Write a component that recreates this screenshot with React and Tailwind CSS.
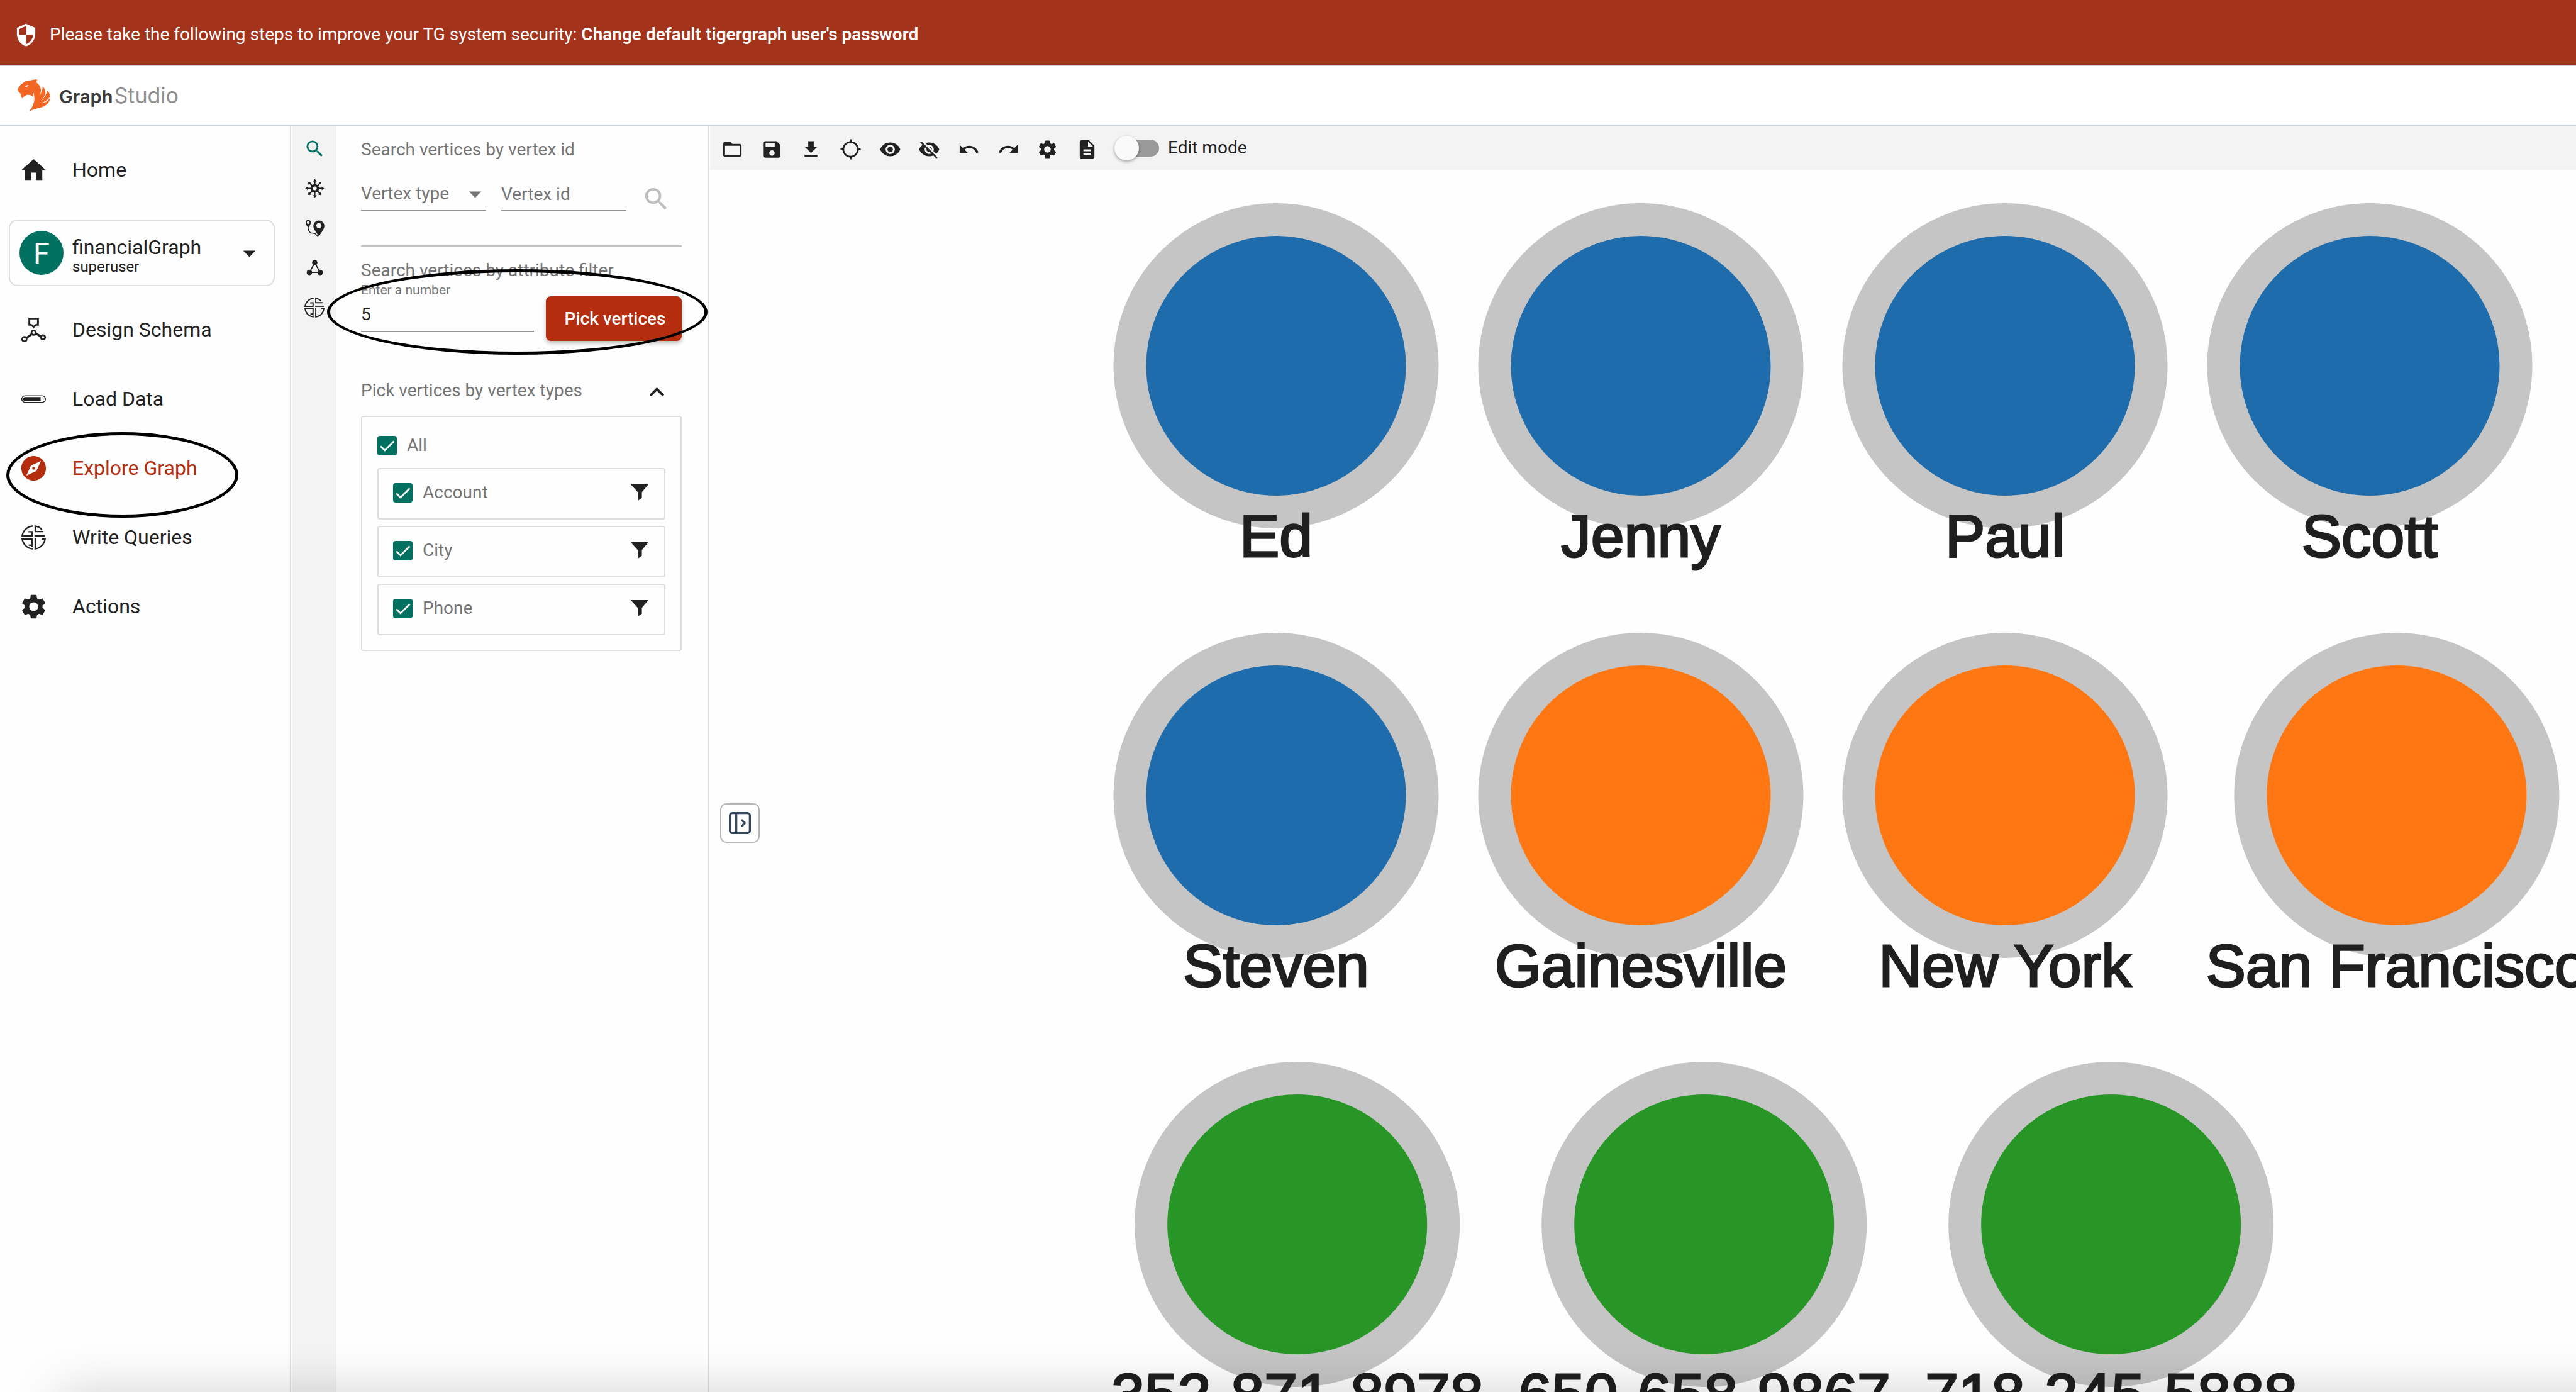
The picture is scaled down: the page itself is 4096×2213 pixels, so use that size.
import {
  MdSecurity, MdHome, MdExplore, MdSettings, MdArrowDropDown, MdSearch, MdFolderOpen, MdSave,
  MdFileDownload, MdLocationSearching, MdVisibility, MdVisibilityOff, MdUndo, MdRedo,
  MdDescription, MdKeyboardArrowUp,
} from "react-icons/md";

function TigerLogo() {
  return (
    <svg viewBox="0 0 160 156" className="h-[51px] w-[52px] shrink-0" aria-hidden="true">
      <path
        fill="#f26522"
        d="M95 0 L92 16 C104 22 112 36 114 50 C114 60 112 70 109 80 C116 66 122 50 123 35 C132 44 137 56 136 66 C134 80 124 94 114 106 C130 92 142 72 145 53 C156 64 161 80 159 94 C155 118 134 132 112 138 C92 143 74 148 58 156 C70 138 80 120 82 100 C83 84 80 66 72 52 C76 64 78 76 76 86 C70 78 60 74 48 76 C38 78 30 84 24 93 C18 88 14 80 15 70 C8 66 4 60 0 52 L3 44 C6 34 16 24 26 18 C38 8 50 4 62 5 C74 2 84 0 95 0 Z"
      />
      <path fill="#fff" d="M36 36 C40 29 48 27 56 27 C50 29 47 33 46 38 C42 35 39 35 36 36 Z" />
      <path fill="#fff" d="M158 84 C150 100 134 108 118 114 C134 116 150 106 158 90 Z" opacity="0.9" />
    </svg>
  );
}

function SchemaIcon() {
  return (
    <svg viewBox="-4 -4 48 48" className="size-[47px]" fill="none" stroke="currentColor" aria-hidden="true">
      <path strokeWidth="3" d="M13 1.5H27V11.5H24.5L20 15L15.5 11.5H13Z" />
      <path strokeWidth="3.4" d="M8.5 33L16.5 27M24 26L31.5 30.5" />
      <g strokeWidth="2.8">
        <circle cx="20" cy="24.6" r="3.5" />
        <circle cx="5" cy="35" r="3.6" />
        <circle cx="35.2" cy="32" r="3.5" />
      </g>
    </svg>
  );
}

function LoadIcon() {
  return (
    <svg viewBox="-4 -4 48 48" className="size-[47px]" fill="none" aria-hidden="true">
      <rect x="0.7" y="14.6" width="38.6" height="10.6" rx="5.3" stroke="currentColor" strokeWidth="1.4" />
      <path fill="currentColor" d="M6.4 16.6H31.4V23.4H6.4A3.4 3.4 0 0 1 6.4 16.6Z" />
    </svg>
  );
}

function GsqlIcon({ className }) {
  return (
    <svg viewBox="0 0 40 40" className={className} fill="none" stroke="currentColor" strokeWidth="2.4" aria-hidden="true">
      <path d="M18.500 1.400A18.700 18.700 0 0 0 1.400 17.400H17.200V10.600H11.500" />
      <path d="M33.500 7.200A18.700 18.700 0 0 0 22.600 1.400V10.400H36" />
      <path d="M21.400 17.400H38.600" />
      <path d="M18.500 38.600A18.700 18.700 0 0 1 1.400 22.600H17.200V36" />
      <path d="M12 32.600H17.200" />
      <path d="M22.600 21.400V38.600A18.700 18.700 0 0 0 38.600 22.600H33.500" />
    </svg>
  );
}

const ANGLES = [0, 45, 90, 135, 180, 225, 270, 315];

function ExpandIcon() {
  return (
    <svg viewBox="0 0 36 36" className="size-[35px]" aria-hidden="true">
      <circle cx="18" cy="18" r="5.1" fill="none" stroke="currentColor" strokeWidth="3.800" />
      {ANGLES.map((a) => (
        <g key={a} transform={`rotate(${a} 18 18)`}>
          <path d="M18 12V5" stroke="currentColor" strokeWidth="2.200" />
          <path d="M18 2.600L21.200 6.600H14.800Z" fill="currentColor" />
        </g>
      ))}
    </svg>
  );
}

function PathIcon() {
  return (
    <svg viewBox="0 0 36 36" className="size-[35px]" aria-hidden="true">
      <path fill="currentColor" fillRule="evenodd" d="M24.7 5.7a9 9 0 0 1 9 9c0 5-5.4 11.6-9 16.7c-3.600-5.100-9-11.700-9-16.700a9 9 0 0 1 9-9ZM24.700 9.700a4.300 4.300 0 1 0 0 8.600a4.300 4.300 0 0 0 0-8.600Z" />
      <path fill="currentColor" fillRule="evenodd" d="M7.300 4.700a4.300 4.300 0 0 1 4.300 4.300c0 2.500-2.600 6-4.300 9c-1.700-3-4.300-6.500-4.300-9a4.300 4.300 0 0 1 4.300-4.300ZM7.300 6.600a2.300 2.300 0 1 0 0 4.600a2.300 2.300 0 0 0 0-4.600Z" />
      <path fill="none" stroke="currentColor" strokeWidth="1.600" d="M7.300 18.800C8 22 9 26 12.500 26.300C16 26.200 18.500 26.500 20 28.600C21 29.800 22 30.600 23.500 31" />
    </svg>
  );
}

function TriangleIcon() {
  return (
    <svg viewBox="0 0 36 36" className="size-[35px]" aria-hidden="true">
      <path fill="none" stroke="currentColor" strokeWidth="1.800" d="M18 10L9.200 25.800H26.800Z" />
      <g fill="currentColor">
        <circle cx="18" cy="9.800" r="4.400" />
        <circle cx="9.200" cy="25.800" r="4.500" />
        <circle cx="26.800" cy="25.800" r="4.500" />
      </g>
    </svg>
  );
}

function FunnelIcon() {
  return (
    <svg viewBox="0 0 26 26" className="size-[26px]" fill="currentColor" aria-hidden="true">
      <path d="M0 0H26V1.200L16.600 12.600V21.800L10.200 26V12.600L0 1.200Z" />
    </svg>
  );
}

function PanelToggleIcon() {
  return (
    <svg viewBox="0 0 36 36" className="size-[35px]" fill="none" stroke="#34495e" strokeWidth="3.400" aria-hidden="true">
      <rect x="1.700" y="1.700" width="32.600" height="32.600" rx="4" />
      <path d="M12 2V34" />
      <path d="M21.500 13.500L26 18L21.500 22.500" strokeLinecap="round" strokeLinejoin="round" />
    </svg>
  );
}

function NavItem({ icon, label, active }) {
  return (
    <a
      href="#"
      aria-current={active ? "page" : undefined}
      className={`flex h-[110px] items-center gap-[38px] pl-[30px] text-[32px] ${active ? "text-[#b52d0f]" : "text-[#212121]"}`}
    >
      {icon}
      <span>{label}</span>
    </a>
  );
}

function Sidebar() {
  return (
    <nav className="w-[463px] shrink-0 border-r-2 border-[#dedede] pt-[15px]">
      <NavItem icon={<MdHome className="size-[47px]" />} label="Home" />
      <button
        type="button"
        className="mx-[14px] mt-6 mb-[14px] flex h-[106px] w-[423px] items-center rounded-[14px] border-2 border-[#dedede] pl-[15px] text-left text-[#212121]"
      >
        <span className="flex size-[70px] items-center justify-center rounded-full bg-[#007060] text-[47px] leading-none text-white">F</span>
        <span className="ml-[14px] flex flex-1 flex-col pt-2.5">
          <span className="text-[32px] leading-[34px]">financialGraph</span>
          <span className="text-[24px] leading-[28px]">superuser</span>
        </span>
        <MdArrowDropDown className="mr-[15px] size-[47px]" />
      </button>
      <NavItem icon={<SchemaIcon />} label="Design Schema" />
      <NavItem icon={<LoadIcon />} label="Load Data" />
      <NavItem icon={<MdExplore className="size-[47px]" />} label="Explore Graph" active />
      <NavItem icon={<GsqlIcon className="m-1 size-[39px]" />} label="Write Queries" />
      <NavItem icon={<MdSettings className="size-[47px]" />} label="Actions" />
    </nav>
  );
}

function Rail() {
  const tools = [
    ["Search vertices", <MdSearch className="size-[35px] text-[#007060]" />],
    ["Expand from vertices", <ExpandIcon />],
    ["Find paths", <PathIcon />],
    ["Show connections", <TriangleIcon />],
    ["Run queries", <GsqlIcon className="size-[32px]" />],
  ];
  return (
    <div className="ml-0.5 flex w-[70px] shrink-0 flex-col items-center gap-7 bg-[#f3f3f3] pt-[19px] text-[#212121]">
      {tools.map(([name, icon]) => (
        <button key={name} type="button" aria-label={name} className="flex size-[35px] items-center justify-center">
          {icon}
        </button>
      ))}
    </div>
  );
}

function Check({ label }) {
  return (
    <label className="flex items-center gap-4">
      <span className="relative size-[31px]">
        <input type="checkbox" defaultChecked className="block size-[31px] appearance-none rounded-[4px] bg-[#007060]" />
        <svg viewBox="0 0 32 32" className="pointer-events-none absolute inset-0" fill="none" stroke="#fff" strokeWidth="2.800" aria-hidden="true">
          <path d="M5.500 17L12.200 23.700L27.300 8.700" />
        </svg>
      </span>
      <span>{label}</span>
    </label>
  );
}

function SearchPanel() {
  return (
    <section className="w-[592px] shrink-0 border-r-2 border-[#dedede] pt-[22px] pr-[41px] pl-[39px] text-[28px] leading-[32px] text-[#757575]">
      <h2>Search vertices by vertex id</h2>
      <div className="mt-7 flex gap-6">
        <div className="relative h-[54px] w-[199px]">
          <select aria-label="Vertex type" className="h-full w-full appearance-none border-b-2 border-[#949494] bg-transparent outline-none">
            <option>Vertex type</option>
          </select>
          <MdArrowDropDown className="pointer-events-none absolute top-[3px] -right-[6px] size-[47px]" />
        </div>
        <input
          type="text"
          aria-label="Vertex id"
          placeholder="Vertex id"
          className="h-[54px] w-[199px] border-b-2 border-[#949494] outline-none placeholder:text-[#757575]"
        />
        <button type="button" aria-label="Search" className="flex h-[58px] items-end text-[#bdbdbd]">
          <MdSearch className="size-[47px]" />
        </button>
      </div>
      <hr className="mt-[50px] border-t-2 border-[#c2c2c2]" />
      <h2 className="mt-[22px]">Search vertices by attribute filter</h2>
      <div className="mt-[3px] flex justify-between">
        <div className="flex w-[275px] flex-col">
          <label htmlFor="pick-count" className="text-[21px] leading-6">Enter a number</label>
          <input
            id="pick-count"
            type="text"
            defaultValue="5"
            className="h-[55px] border-b-2 border-[#949494] text-[#212121] outline-none"
          />
        </div>
        <button type="button" className="mt-[22px] h-[71px] w-[216px] rounded-[8px] bg-[#b52d0f] pl-1 font-medium text-white shadow-[0_4px_6px_rgba(0,0,0,0.25)]">
          Pick vertices
        </button>
      </div>
      <div className="mt-[58px] flex h-[47px] justify-between">
        <h2 className="leading-[42px]">Pick vertices by vertex types</h2>
        <button type="button" aria-label="Collapse vertex types" className="mr-4 text-[#212121]">
          <MdKeyboardArrowUp className="size-[47px]" />
        </button>
      </div>
      <div className="mt-[14px] rounded-[4px] border-2 border-[#dedede] px-6 pt-[29px] pb-[23px]">
        <Check label="All" />
        <ul className="mt-5 flex flex-col gap-2.5">
          {["Account", "City", "Phone"].map((name) => (
            <li key={name} className="flex h-[82px] items-center justify-between rounded-[4px] border-2 border-[#dedede] pr-[26px] pb-1 pl-[23px]">
              <Check label={name} />
              <button type="button" aria-label={`Filter ${name}`} className="text-[#212121]">
                <FunnelIcon />
              </button>
            </li>
          ))}
        </ul>
      </div>
    </section>
  );
}

function Toolbar() {
  const tools = [
    ["Open", MdFolderOpen], ["Save", MdSave], ["Download", MdFileDownload], ["Center", MdLocationSearching],
    ["Show", MdVisibility], ["Hide", MdVisibilityOff], ["Undo", MdUndo], ["Redo", MdRedo],
    ["Settings", MdSettings], ["Details", MdDescription],
  ];
  return (
    <div className="flex h-[70px] shrink-0 items-center bg-[#f3f3f3] pl-1 text-[#212121]">
      <div className="flex w-[627px] pt-1">
        {tools.map(([name, Icon]) => (
          <button key={name} type="button" aria-label={name} className="flex flex-1 justify-center">
            <Icon className="size-[35px]" />
          </button>
        ))}
      </div>
      <label className="ml-3 flex items-center gap-[14px] text-[28px]">
        <input
          type="checkbox"
          role="switch"
          className="relative h-[27px] w-[71px] appearance-none rounded-full bg-[#999] before:absolute before:-top-1.5 before:left-0 before:size-[39px] before:rounded-full before:bg-[#fafafa] before:shadow-[0_2px_5px_rgba(0,0,0,0.35)] before:content-['']"
        />
        <span>Edit mode</span>
      </label>
    </div>
  );
}

const BLUE = "bg-[#1f6cac]";
const ORANGE = "bg-[#ff7712]";
const GREEN = "bg-[#289627]";

/* Vertex positions on the canvas: circle centre in x, circle top in y. */
const VERTICES = [
  { label: "Ed", x: 900, y: 53, fill: BLUE },
  { label: "Jenny", x: 1480, y: 53, fill: BLUE },
  { label: "Paul", x: 2059, y: 53, fill: BLUE },
  { label: "Scott", x: 2639, y: 53, fill: BLUE },
  { label: "Steven", x: 900, y: 736, fill: BLUE },
  { label: "Gainesville", x: 1480, y: 736, fill: ORANGE },
  { label: "New York", x: 2059, y: 736, fill: ORANGE },
  { label: "San Francisco", x: 2682, y: 736, fill: ORANGE },
  { label: "352-871-8978", x: 934, y: 1418, fill: GREEN },
  { label: "650-658-9867", x: 1581, y: 1418, fill: GREEN },
  { label: "718-245-5888", x: 2228, y: 1418, fill: GREEN },
];

function Canvas() {
  return (
    <div className="relative flex-1 overflow-hidden">
      {VERTICES.map((v) => (
        <div
          key={v.label}
          className="absolute flex w-max -translate-x-1/2 flex-col items-center"
          style={{ left: v.x, top: v.y }}
        >
          <div className={`size-[517px] rounded-full border-[52px] border-[#c5c5c5] ${v.fill}`} />
          <span className="relative -mt-[38px] font-['Liberation_Sans',Arial,sans-serif] text-[95px] leading-[100px] whitespace-nowrap text-[#1f1f1f] [-webkit-text-stroke:3px_#1f1f1f]">
            {v.label}
          </span>
        </div>
      ))}
      <button
        type="button"
        aria-label="Expand panel"
        className="absolute top-[1007px] left-4 flex size-[63px] items-center justify-center rounded-[10px] border-2 border-[#b5b5b5] bg-white"
      >
        <PanelToggleIcon />
      </button>
    </div>
  );
}

export default function App() {
  return (
    <div className="relative flex h-screen flex-col overflow-hidden bg-[#fefefe] font-['Roboto',sans-serif]">
      <div className="flex h-[105px] shrink-0 items-center border-b-2 border-[#d0d0d0] bg-[#a3331b] pt-[7px] pl-[22px] text-[28px] text-white">
        <MdSecurity className="size-[39px]" />
        <p className="ml-[18px]">
          Please take the following steps to improve your TG system security:{" "}
          <a href="#" className="font-semibold">Change default tigergraph user's password</a>
        </p>
      </div>
      <header className="flex h-[95px] shrink-0 items-center border-b-2 border-[#ccd4da] bg-white pl-[28px]">
        <TigerLogo />
        <div className="ml-[14px] flex items-baseline gap-0.5 font-['Inter',sans-serif]">
          <span className="text-[29px] font-semibold text-[#3a3a3a]">Graph</span>
          <span className="text-[34px] text-[#8f8f8f]">Studio</span>
        </div>
      </header>
      <main className="flex min-h-0 flex-1">
        <Sidebar />
        <Rail />
        <SearchPanel />
        <div className="ml-0.5 flex min-w-0 flex-1 flex-col">
          <Toolbar />
          <Canvas />
        </div>
      </main>
      <div className="pointer-events-none absolute top-[687px] left-[10px] h-[136px] w-[369px] rounded-[50%] border-[5px] border-black" />
      <div className="pointer-events-none absolute top-[428px] left-[520px] h-[136px] w-[605px] rounded-[50%] border-[5px] border-black" />
      <div className="pointer-events-none absolute top-full -right-[200px] left-[93px] h-[200px] shadow-[0_0_80px_rgba(0,0,0,0.18)]" />
    </div>
  );
}
